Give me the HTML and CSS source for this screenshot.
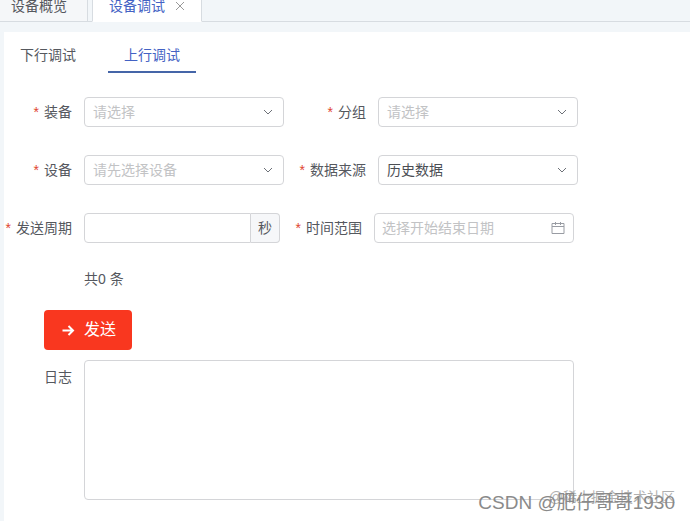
FILE: index.html
```
<!DOCTYPE html>
<html lang="zh-CN">
<head>
    <meta charset="UTF-8">
    <meta name="viewport" content="width=device-width, initial-scale=1.0">
    <title>设备调试</title>
    <link rel="stylesheet" href="styles.css">
</head>
<body>
    <nav class="page-tabs">
        <a class="page-tab" href="#overview">设备概览</a>
        <div class="page-tab active">
            <a href="#debug">设备调试</a>
            <button class="tab-close" type="button" aria-label="关闭">
                <svg width="10" height="10" viewBox="0 0 10 10"><path d="M1 1l8 8M9 1L1 9"/></svg>
            </button>
        </div>
    </nav>

    <main class="panel">
        <nav class="sub-tabs">
            <a class="sub-tab" href="#down">下行调试</a>
            <a class="sub-tab active" href="#up">上行调试</a>
        </nav>

        <form class="debug-form">
            <div class="form-row">
                <label class="label required" for="equipment">装备</label>
                <div class="control">
                    <select id="equipment" class="placeholder">
                        <option>请选择</option>
                    </select>
                    <svg class="arrow" width="12" height="12" viewBox="0 0 12 12"><path d="M2 4l4 4 4-4"/></svg>
                </div>
                <label class="label second required" for="group">分组</label>
                <div class="control">
                    <select id="group" class="placeholder">
                        <option>请选择</option>
                    </select>
                    <svg class="arrow" width="12" height="12" viewBox="0 0 12 12"><path d="M2 4l4 4 4-4"/></svg>
                </div>
            </div>

            <div class="form-row">
                <label class="label required" for="device">设备</label>
                <div class="control">
                    <select id="device" class="placeholder">
                        <option>请先选择设备</option>
                    </select>
                    <svg class="arrow" width="12" height="12" viewBox="0 0 12 12"><path d="M2 4l4 4 4-4"/></svg>
                </div>
                <label class="label second required" for="source">数据来源</label>
                <div class="control">
                    <select id="source">
                        <option>历史数据</option>
                        <option>实时数据</option>
                    </select>
                    <svg class="arrow" width="12" height="12" viewBox="0 0 12 12"><path d="M2 4l4 4 4-4"/></svg>
                </div>
            </div>

            <div class="form-row">
                <label class="label required" for="period">发送周期</label>
                <div class="control with-unit">
                    <input id="period" type="text">
                    <span class="unit">秒</span>
                </div>
                <label class="label second required" for="range">时间范围</label>
                <div class="control">
                    <input id="range" type="text" placeholder="选择开始结束日期">
                    <svg class="calendar" width="14" height="14" viewBox="0 0 14 14"><path d="M1 2.500h12v10H1zM1 5.500h12M4.500 1v3M9.500 1v3"/></svg>
                </div>
            </div>

            <p class="total">共0 条</p>

            <button class="send" type="button">
                <svg width="16" height="16" viewBox="0 0 16 16"><path d="M2.500 8.500H13M8.500 4L13 8.500 8.500 13"/></svg>
                发送
            </button>

            <div class="log-row">
                <label class="label" for="log">日志</label>
                <textarea id="log"></textarea>
            </div>
        </form>
    </main>

    <div class="watermark community">@稀土掘金技术社区</div>
    <div class="watermark author">CSDN @肥仔哥哥1930</div>
</body>
</html>
```

FILE: styles.css
```
* {
    box-sizing: border-box;
}
body {
    margin: 0;
    min-height: 100vh;
    display: flex;
    flex-direction: column;
    position: relative;
    background: #f2f6f9;
    color: #55585e;
    font-family: "Liberation Sans", "Noto Sans CJK SC", sans-serif;
    font-size: 14px;
    line-height: 20px;
}
a {
    color: inherit;
    text-decoration: none;
}
svg {
    fill: none;
    stroke: currentColor;
}

/* top page tabs */
.page-tabs {
    display: flex;
    align-items: flex-end;
    gap: 4px;
    height: 22px;
    overflow: hidden;
    box-shadow: inset 0 -1px #d7dce1;
}
.page-tab {
    flex: none;
    display: flex;
    align-items: center;
    gap: 10px;
    height: 32px;
    padding: 0 20px 0 11px;
    border-right: 1px solid #d7dce1;
    border-bottom: 1px solid #d7dce1;
    background: #f5f7f9;
}
.page-tab.active {
    padding: 0 16px;
    border-left: 1px solid #d7dce1;
    border-bottom-color: #fff;
    background: #fff;
    color: #4362c4;
}
.tab-close {
    display: flex;
    padding: 0;
    border: 0;
    background: none;
    color: #999;
}

/* content */
.panel {
    flex: 1;
    margin: 10px 0 0 4px;
    background: #fff;
}
.sub-tabs {
    display: flex;
    gap: 16px;
}
.sub-tab {
    height: 41px;
    padding: 13px 16px 0;
    border-bottom: 2px solid transparent;
}
.sub-tab.active {
    color: #4362c4;
    border-color: #4565a8;
}
.debug-form {
    padding: 24px 0 20px;
}
.form-row {
    display: flex;
    margin-bottom: 28px;
}
.label {
    flex: none;
    width: 68px;
    line-height: 30px;
    text-align: right;
    white-space: nowrap;
}
.label.second {
    width: 82px;
}
.required::before {
    content: "*";
    margin-right: 5px;
    color: #e0452f;
}
.control {
    position: relative;
    width: 200px;
    margin-left: 12px;
}
select,
input,
textarea {
    display: block;
    width: 100%;
    height: 30px;
    margin: 0;
    padding: 0 8px;
    border: 1px solid #d4d5d8;
    border-radius: 4px;
    background: #fff;
    color: #4b4e54;
    font: inherit;
    appearance: none;
}
select.placeholder,
input::placeholder {
    color: #c2c3c5;
    opacity: 1;
}
input {
    padding: 0 7px;
}
.arrow,
.calendar {
    position: absolute;
    top: 9px;
    right: 10px;
    color: #6d7178;
    pointer-events: none;
}
.calendar {
    top: 8px;
    right: 9px;
    color: #999ca3;
}
.with-unit {
    display: flex;
    width: 196px;
}
.with-unit input {
    flex: 1;
    min-width: 0;
    border-radius: 4px 0 0 4px;
}
.unit {
    padding: 0 7px;
    border: 1px solid #d4d5d8;
    border-left: 0;
    border-radius: 0 4px 4px 0;
    background: #f6f7f9;
    line-height: 28px;
}
.total {
    margin: -2px 0 21px 80px;
}
.send {
    display: flex;
    align-items: center;
    gap: 8px;
    height: 40px;
    margin: 0 0 10px 40px;
    padding: 0 16px;
    border: 0;
    border-radius: 4px;
    background: #f9371f;
    color: #fff;
    font: inherit;
    font-size: 16px;
}
.send svg {
    stroke-width: 2;
}
.log-row {
    display: flex;
}
.log-row .label {
    line-height: 34px;
}
.log-row textarea {
    width: 490px;
    height: 140px;
    margin-left: 12px;
    padding: 8px;
    resize: none;
}

/* watermarks over the bottom corner */
.watermark {
    position: absolute;
    right: 15px;
    white-space: nowrap;
    pointer-events: none;
}
.community {
    bottom: 14px;
    color: #b0b0b0;
}
.author {
    bottom: 8px;
    color: #8a8a8a;
    font-size: 19px;
}
```
